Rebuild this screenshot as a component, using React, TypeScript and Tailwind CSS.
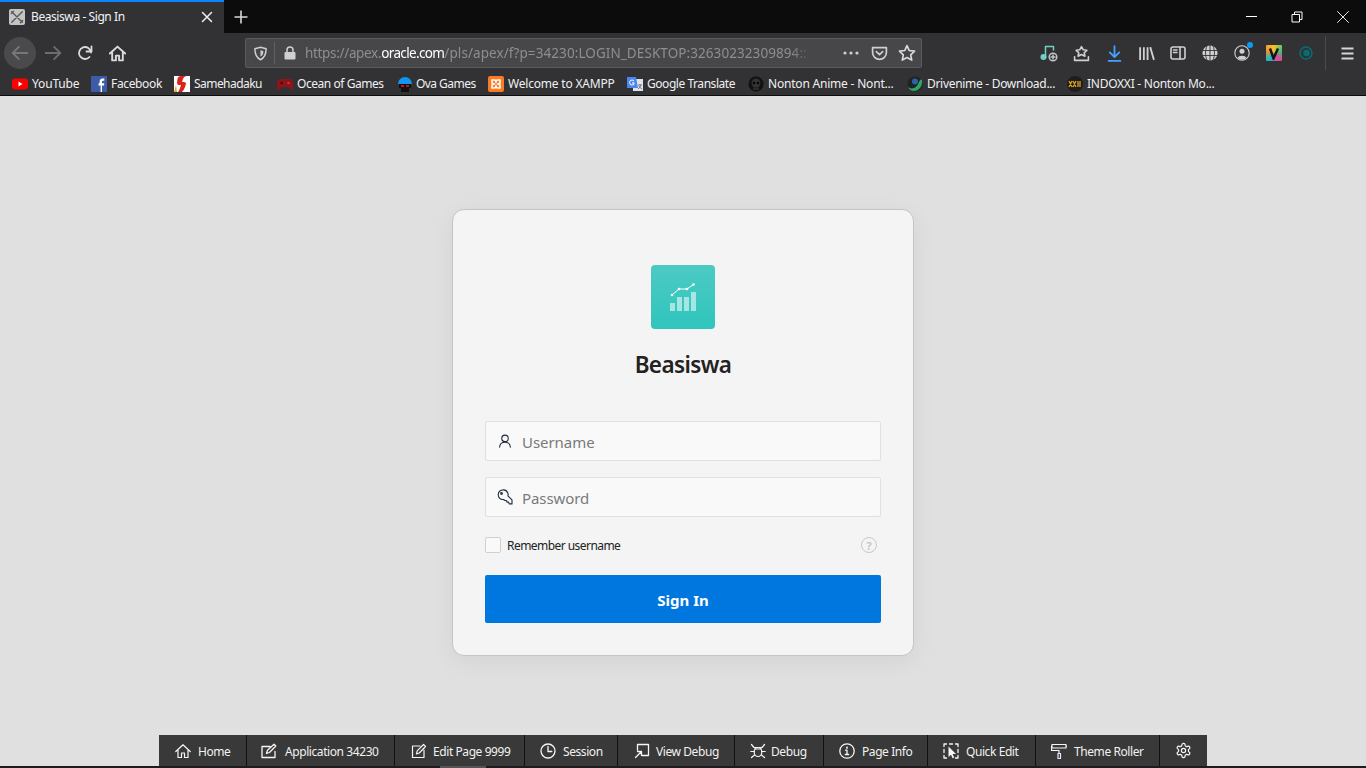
import React from "react";

const S = ({ children, c = "#d7d7d8", w = 16, vb = "0 0 16 16", sw = 1.5, f = "none" }: any) => (
  <svg width={w} height={w} viewBox={vb} fill={f} stroke={c} strokeWidth={sw} strokeLinecap="round" strokeLinejoin="round" className="shrink-0">
    {children}
  </svg>
);

const bookmarks: [string, number, string, React.ReactNode][] = [
  ["YouTube", 79, "ml-[4px] tracking-[-0.15px]", <svg width="16" height="16" viewBox="0 0 16 16"><rect x="0" y="2.500" width="16" height="11" rx="3" fill="#f00" /><path d="M6.500 5.500v5l4-2.500z" fill="#fff" /></svg>],
  ["Facebook", 83, "ml-[4px] tracking-[-0.35px]", <svg width="16" height="16" viewBox="0 0 16 16"><rect width="16" height="16" fill="#3b5ca8" /><path d="M11 16V9.500h2l.3-2.300H11V6c0-.8.3-1.200 1.200-1.200h1.100V2.600c-.4 0-1-.1-1.700-.1-1.800 0-3 1-3 3v1.700H7.600v2.300h2V16z" fill="#fff" /></svg>],
  ["Samehadaku", 103, "ml-[4px] tracking-[-0.55px]", <svg width="16" height="16" viewBox="0 0 16 16"><rect width="16" height="16" fill="#fff" /><path d="M13 0H7Q4 0 3.500 3L3 7q0 2 2 2h2l-1 3q-.5 2-2 4h4q2-2 3-5l1-3q0-2-2-2H8l1-3q.5-2 3-3z" fill="#d8261c" /><path d="M0 16l2-7 1 7z" fill="#e9a13a" /></svg>],
  ["Ocean of Games", 120, "ml-[4px] tracking-[-0.45px]", <svg width="16" height="16" viewBox="0 0 16 16"><path d="M3 3h10q3 0 3 5v4q0 2-2 2-1 0-3-3H5q-2 3-3 3-2 0-2-2V8q0-5 3-5z" fill="#8d1418" /><circle cx="4.500" cy="7" r="1.300" fill="#500" /><circle cx="11.500" cy="7" r="1.300" fill="#c33" /></svg>],
  ["Ova Games", 91, "ml-[3px] tracking-[-0.55px]", <svg width="16" height="16" viewBox="0 0 16 16"><path d="M1 8a7 7 0 0 1 14 0z" fill="#1294f2" /><rect x="2" y="8" width="12" height="4" fill="#111" /><rect x="4" y="12" width="8" height="4" fill="#111" /><rect x="4" y="9" width="3" height="2" fill="#c11" /><rect x="9" y="9" width="3" height="2" fill="#c11" /></svg>],
  ["Welcome to XAMPP", 139, "ml-[4px] tracking-[-0.2px]", <svg width="16" height="16" viewBox="0 0 16 16"><rect width="16" height="16" rx="2" fill="#fb7a24" /><path d="M4 4h3l1 2 1-2h3v3l-2 1 2 1v3H9L8 10l-1 2H4V9l2-1-2-1z" fill="none" stroke="#fff" strokeWidth="1.500" /></svg>],
  ["Google Translate", 121, "ml-[4px] tracking-[-0.45px]", <svg width="16" height="16" viewBox="0 0 16 16"><rect x="6" y="3" width="10" height="12" fill="#dfe3ea" /><path d="M0 1h9l2 11H0z" fill="#4a86ef" /><path d="M7 4.500Q3 3 2.500 6.500 3 10 7 8.500V6.800H5" stroke="#fff" fill="none" /><path d="M11 9h4M13 8v1M14 9q-1 3-3 4M12 10q1 2 3 3" stroke="#667" strokeWidth=".8" fill="none" /></svg>],
  ["Nonton Anime - Nont...", 159, "ml-[4px] tracking-[-0.2px]", <svg width="16" height="16" viewBox="0 0 16 16"><circle cx="8" cy="8" r="7.500" fill="#111" /><circle cx="8" cy="7" r="4.500" fill="#333" /><circle cx="6" cy="7" r="1.200" fill="#000" /><circle cx="10" cy="7" r="1.200" fill="#000" /><path d="M5 11.500h6v2.500H5z" fill="#2a2a2a" /></svg>],
  ["Drivenime - Download...", 160, "ml-[4px] tracking-[-0.3px]", <svg width="16" height="16" viewBox="0 0 16 16"><circle cx="8" cy="8" r="7.500" fill="#222" /><path d="M1 11c4 3 9 1 11-5 1-2 2-3 3-2 1 6-3 11-8 11-3 0-5-2-6-4z" fill="#2aa866" /><circle cx="8" cy="5.500" r="3" fill="#2b63a8" /></svg>],
  ["INDOXXI - Nonton Mo...", 150, "ml-[4px] tracking-[-0.25px]", <svg width="16" height="16" viewBox="0 0 16 16"><circle cx="8" cy="8" r="8" fill="#1d1d1d" /><path d="M2 5l3 6M5 5l-3 6M6 5l3 6M9 5l-3 6M11 5v6M13 5v6" stroke="#d9a21b" strokeWidth="1.300" fill="none" /></svg>],
];

const dev: [string, number, string, React.ReactNode][] = [
  ["Home", 88, "pl-[16px] gap-[7px]", <S c="#f6f6f6" sw={1.200}><path d="M.8 8.500 8 1.800l7.200 6.700M3 7v7.500h3.500V10h3v4.500H13V7" /></S>],
  ["Application 34230", 148, "pl-[14px] gap-[8px]", <S c="#f6f6f6" sw={1.300}><path d="M14 8.500v6H1v-11h8M5.500 10.500l1-3.200L13 1.200l1.800 1.800L8.500 9.500z" fill="none" /></S>],
  ["Edit Page 9999", 130, "pl-[16px] gap-[6px]", <S c="#f6f6f6" sw={1.200}><path d="M9 3H1.500v11.500H13V7M5.500 10.800l.7-3L12.500 1.500l2 2L8.300 10z" /></S>],
  ["Session", 93, "pl-[15px] gap-[7px]", <S c="#f6f6f6" sw={1.300}><circle cx="8" cy="8" r="7" /><path d="M8 3.500V8.500h3.800" /></S>],
  ["View Debug", 117, "pl-[16px] gap-[6px]", <S c="#f6f6f6" sw={1.300}><path d="M3.500 7V1.500h11v11H8.500M1.500 14.500l6-6M3.500 8.500h4v4" /></S>],
  ["Debug", 89, "pl-[15px] gap-[5px]", <S c="#f6f6f6" sw={1.200}><ellipse cx="8" cy="9" rx="3.800" ry="4.500" /><path d="M4.500 6h7M1.500 1.500 4 4.500h8l2.500-3M.8 8.500h3.400M11.800 8.500h3.400M1.500 14.500 4.500 12M14.500 14.500 11.500 12" /></S>],
  ["Page Info", 104, "pl-[15px] gap-[7px]", <S c="#f6f6f6" sw={1.300}><circle cx="8" cy="8" r="7.200" /><path d="M6.500 7.200H8v4M6.300 11.500h3.400" /><path d="M8 4.300v.6" strokeWidth="1.700" /></S>],
  ["Quick Edit", 108, "pl-[15px] gap-[7px]", <S c="#f6f6f6" sw={1.300}><path d="M1 3.500V1h2.500M6.500 1h3M12.500 1H15v2.500M15 6.500v3M1 6.500v3M1 12.500V15h2.500M12.500 15H15v-2.500" /><path d="M5.500 3.500v10.500l2.500-2.300 1.600 3.600 1.600-.7L9.600 11H13z" fill="#f6f6f6" stroke="none" /></S>],
  ["Theme Roller", 124, "pl-[15px] gap-[7px]", <S c="#f6f6f6" sw={1.200}><path d="M1 1.500h14v3.500H1zM15 3.200h1M1 3.200H.5v4.300H8v3" /><path d="M7 10.500h2.500V15.500H7z" stroke="#f0e6ff" /></S>],
];

const Gear = () => (
  <svg width="17" height="17" viewBox="0 0 24 24" fill="none" stroke="#f6f6f6" strokeWidth="1.700" strokeLinecap="round" strokeLinejoin="round" className="shrink-0">
    <path d="M12.220 2h-.44a2 2 0 0 0-2 2v.18a2 2 0 0 1-1 1.730l-.43.250a2 2 0 0 1-2 0l-.15-.08a2 2 0 0 0-2.730.730l-.220.380a2 2 0 0 0 .730 2.730l.150.100a2 2 0 0 1 1 1.720v.510a2 2 0 0 1-1 1.740l-.150.090a2 2 0 0 0-.730 2.730l.220.380a2 2 0 0 0 2.730.730l.150-.080a2 2 0 0 1 2 0l.430.250a2 2 0 0 1 1 1.730V20a2 2 0 0 0 2 2h.440a2 2 0 0 0 2-2v-.180a2 2 0 0 1 1-1.730l.430-.250a2 2 0 0 1 2 0l.150.080a2 2 0 0 0 2.730-.730l.220-.390a2 2 0 0 0-.730-2.730l-.150-.080a2 2 0 0 1-1-1.740v-.500a2 2 0 0 1 1-1.740l.150-.090a2 2 0 0 0 .730-2.730l-.220-.380a2 2 0 0 0-2.730-.730l-.150.080a2 2 0 0 1-2 0l-.430-.250a2 2 0 0 1-1-1.730V4a2 2 0 0 0-2-2z" />
    <circle cx="12" cy="12" r="3" />
  </svg>
);

const Slot = ({ w, children }: any) => (
  <div className="flex h-full items-center justify-center shrink-0" style={{ width: w }}>{children}</div>
);

export default function App() {
  return (
    <div className="flex h-screen w-full flex-col overflow-hidden bg-[#e0e0e0] font-['Noto_Sans','Open_Sans',sans-serif]">
      {/* tab strip */}
      <div className="flex h-[33px] shrink-0 bg-[#0c0c0d]">
        <div className="flex w-[224px] items-center border-t-2 border-[#0a84ff] bg-[#323234] pl-[9px] pr-[11px] pb-[1px]">
          <div className="flex h-4 w-4 items-center justify-center rounded-[2px] bg-[#c4c4c4]">
            <S c="#55585c" w={14} sw={1.600}><path d="M2 2l12 12M14 2 2 14M4 1.500 1.500 4M12 14.500l2.500-2.500" /></S>
          </div>
          <span className="ml-[6px] flex-1 text-[12px] tracking-[-0.42px] text-[#f4f4f5]">Beasiswa - Sign In</span>
          <S c="#f0f0f0" w={12} vb="0 0 12 12" sw={1.500}><path d="M1.500 1.500l9 9M10.500 1.500l-9 9" /></S>
        </div>
        <Slot w={34}><S c="#d8d8d8" w={14} vb="0 0 14 14" sw={1.600}><path d="M7 .5v13M.5 7h13" strokeLinecap="butt" /></S></Slot>
        <div className="flex-1" />
        <Slot w={46}><div className="h-px w-[11px] bg-white" /></Slot>
        <Slot w={46}><S c="#fff" w={12} vb="0 0 12 12" sw={1}><path d="M1 3.500h7.500V11H1zM3.500 3.500V1H11v7.500H8.500" strokeLinejoin="miter" strokeLinecap="butt" /></S></Slot>
        <Slot w={46}><S c="#fff" w={12} vb="0 0 12 12" sw={.9}><path d="M.5.500l11 11M11.500.500l-11 11" /></S></Slot>
      </div>

      {/* nav toolbar */}
      <div className="flex h-[40px] shrink-0 items-center bg-[#323234] pl-[4px]">
        <div className="flex h-8 w-8 shrink-0 items-center justify-center rounded-full bg-[#4a4a4c]">
          <S c="#77777a" w={18} sw={1.600}><path d="M14.500 8h-13M7 2.500 1.500 8 7 13.500" /></S>
        </div>
        <Slot w={33}><S c="#6d6d70" w={18} sw={1.600}><path d="M1.500 8h13M9 2.500 14.500 8 9 13.500" /></S></Slot>
        <Slot w={32}><S c="#dadadb" w={16} sw={1.800}><path d="M14 7.500A6 6 0 1 0 12.500 12M14.500 1.500v5h-5" /></S></Slot>
        <Slot w={32}><S c="#dadadb" w={17} sw={1.800}><path d="M.8 8 8 1.500 15.200 8M3 7v7.500h3.500V10h3v4.500H13V7" /></S></Slot>
        <div className="ml-[112px] flex h-[30px] w-[677px] shrink-0 items-center rounded-[2px] border border-[#5b5b5d] bg-[#474749]">
          <Slot w={28}><S c="#cfcfd0" w={15} sw={1.600}><path d="M8 1.300 14 3c0 6-1.500 9.500-6 11.700C3.500 12.500 2 9 2 3z" /><path d="M8 4.500 11 5.300c0 3-.8 4.800-3 6z" fill="#cfcfd0" stroke="none" /></S></Slot>
          <div className="h-[22px] w-px bg-[#616163]" />
          <Slot w={30}><svg width="14" height="14" viewBox="0 0 14 14"><path d="M4 6V4a3 3 0 0 1 6 0v2" stroke="#cfcfd0" strokeWidth="1.500" fill="none" /><rect x="1.500" y="6" width="11" height="7.500" rx="1" fill="#cfcfd0" /></svg></Slot>
          <div className="w-[516px] whitespace-nowrap text-[13.500px] text-[#8d8e90] [mask-image:linear-gradient(to_right,black_486px,transparent_506px)]">
            <span className="tracking-[-0.33px]">https://apex.</span><span className="tracking-[-0.64px] text-white">oracle.com</span><span className="tracking-[0.08px]">/pls/apex/f?p=34230:LOGIN_DESKTOP:32630232309894::</span>
          </div>
          <div className="flex-1" />
          <Slot w={28}><svg width="16" height="4" viewBox="0 0 16 4"><circle cx="2" cy="2" r="1.600" fill="#cfcfd0" /><circle cx="8" cy="2" r="1.600" fill="#cfcfd0" /><circle cx="14" cy="2" r="1.600" fill="#cfcfd0" /></svg></Slot>
          <Slot w={28}><S c="#cfcfd0" w={17} sw={1.600}><path d="M1.500 2.500h13V7A6.500 6.500 0 0 1 1.500 7z" /><path d="M5 6.200 8 9l3-2.800" /></S></Slot>
          <Slot w={28}><S c="#dadadb" w={18} sw={1.500}><path d="m8 1.500 2 4.300 4.700.6-3.400 3.200.9 4.700L8 12l-4.200 2.300.9-4.700L1.300 6.400 6 5.800z" /></S></Slot>
        </div>
        <div className="ml-[111px] flex h-full items-center">
          <Slot w={32}>
            <S c="#6fd0c3" w={18} vb="0 0 18 18" sw={1.500}><path d="M5.500 13V2.500h8V6" /><circle cx="3.500" cy="13" r="2.300" fill="#6fd0c3" /><circle cx="13" cy="13" r="3.800" stroke="#bfc3c5" /><path d="M13 11v4M11 13h4" stroke="#bfc3c5" /></S>
          </Slot>
          <Slot w={33}><S c="#d0d0d1" w={17} sw={1.500}><path d="m8 1.500 1.700 3 3.300.5-2.400 2.300.6 3.200L8 9l-3.200 1.500.6-3.200L3 5l3.300-.5z" /><path d="M1.500 11v3.500h13V11" /></S></Slot>
          <Slot w={32}><S c="#45a1ff" w={17} sw={1.700}><path d="M8 1v10M3.500 7 8 11.300 12.500 7M2.500 15h11" /></S></Slot>
          <Slot w={32}><S c="#d0d0d1" w={17} sw={1.700}><path d="M2 2v12M5.500 2v12M9 2v12M11.500 2l3.500 12" strokeLinecap="butt" /></S></Slot>
          <Slot w={32}><S c="#d0d0d1" w={16} sw={1.600}><rect x="1" y="2" width="14" height="12" rx="2" /><path d="M10 2v12M3.500 5H7M3.500 7.500H7" /></S></Slot>
          <Slot w={32}><S c="#323234" w={16} sw={.9} ><circle cx="8" cy="8" r="7.600" fill="#d0d0d1" stroke="none" /><path d="M.5 5.500h15M.5 10.500h15M8 .5v15M5 1c-2 4-2 10 0 14M11 1c2 4 2 10 0 14" /></S></Slot>
          <Slot w={32}>
            <div className="relative h-4 w-4">
              <S c="#d0d0d1" w={16} sw={1.100}><circle cx="8" cy="8" r="7.200" /><circle cx="8" cy="6.300" r="2.500" fill="#d0d0d1" stroke="none" /><path d="M3.600 12.800c1-2.800 7.800-2.800 8.800 0a6 6 0 0 1-8.800 0z" fill="#d0d0d1" stroke="none" /></S>
              <div className="absolute -right-[3px] -top-[3px] h-[6px] w-[6px] rounded-full bg-[#0a9bf5]" />
            </div>
          </Slot>
          <Slot w={32}>
            <div className="flex h-4 w-4 items-center justify-center rounded-[1px] bg-[conic-gradient(#f7c623,#3fc47a,#e6439b,#17b8c9,#f7922b,#f7c623)]">
              <svg width="12" height="13" viewBox="0 0 12 13"><path d="M2 1.500 5.500 11.500 10 1.500" fill="none" stroke="#141414" strokeWidth="2.400" /></svg>
            </div>
          </Slot>
          <Slot w={32}><S c="#076d75" w={14} vb="0 0 14 14" sw={1.500}><circle cx="7" cy="7" r="6" /><circle cx="7.500" cy="7" r="2.500" fill="#076d75" /></S></Slot>
          <div className="ml-[3px] h-[34px] w-px bg-[#4b4b4d]" />
          <div className="flex h-full w-[40px] shrink-0 items-center pl-[15px]"><S c="#d5d5d6" w={13} vb="0 0 13 13" sw={1.800}><path d="M.5 1.500h12M.5 6.500h12M.5 11.500h12" strokeLinecap="butt" /></S></div>
        </div>
      </div>

      {/* bookmarks */}
      <div className="flex h-[22px] shrink-0 items-start bg-[#323234] pl-[12px]">
        {bookmarks.map(([t, w, tr, ic]) => (
          <div key={t} className="flex h-[22px] shrink-0 items-center" style={{ width: w }}>
            {ic}
            <span className={"whitespace-nowrap text-[12px] text-[#f0f0f1] " + tr}>{t}</span>
          </div>
        ))}
      </div>
      <div className="h-px shrink-0 bg-[#0c0c0d]" />

      {/* page */}
      <div className="flex flex-1 flex-col items-center pt-[113px]">
        <div className="flex h-[447px] w-[462px] flex-col items-center rounded-[12px] border border-[#c4c4c4] bg-[#f4f4f4] px-[32px] pt-[55px] shadow-[0_6px_24px_rgba(0,0,0,0.06)]">
          <div className="flex h-16 w-16 items-center justify-center rounded-[4px] bg-[linear-gradient(#4ccac3,#2fc5bd)]">
            <svg width="28" height="28" viewBox="0 0 28 28">
              <g fill="#ffffff" fillOpacity=".55">
                <rect x="1" y="20" width="5" height="8" />
                <rect x="8" y="14" width="5" height="14" />
                <rect x="15" y="14" width="5" height="14" />
                <rect x="22" y="9" width="5" height="19" />
              </g>
              <path d="M3 12l7-6h8L24.500 1.500" stroke="#fff" strokeWidth="1" fill="none" />
              <g fill="#fff"><circle cx="3" cy="12" r="1.300" /><circle cx="10" cy="6" r="1.300" /><circle cx="18" cy="6" r="1.300" /><circle cx="24.500" cy="1.500" r="1.300" /></g>
            </svg>
          </div>
          <h1 className="mt-[19px] h-[34px] text-[22.500px] font-semibold leading-[34px] tracking-[-0.6px] text-[#222]">Beasiswa</h1>
          <div className="mt-[39px] flex h-10 w-[396px] shrink-0 items-center rounded-[2px] border border-[#e0e0e0] bg-[#f9f9f9] pl-[12px]">
            <S c="#1f2a3c" w={14} sw={1.200}><circle cx="8" cy="5" r="3.700" /><path d="M1.800 15c.3-3.500 2.500-5.500 6.200-5.500s5.900 2 6.200 5.500" /></S>
            <span className="ml-[10px] pt-[3px] text-[15px] tracking-[-0.05px] text-[#7a7a7a]">Username</span>
          </div>
          <div className="mt-[16px] flex h-10 w-[396px] shrink-0 items-center rounded-[2px] border border-[#e0e0e0] bg-[#f9f9f9] pl-[11px]">
            <S c="#1f2a3c" w={16} sw={1.100}><path d="M1.200 5.500a5 5 0 0 1 9.600-1.500c.4 1 .4 2 .1 2.800l4.100 4.100v4h-2.800l-.6-1.800h-1.600l-.6-1.600H8L6.400 10.500C3.500 11 1.200 8.500 1.200 5.500z" /><circle cx="4.500" cy="4.500" r=".9" /></S>
            <span className="ml-[9px] pt-[3px] text-[15px] tracking-[-0.1px] text-[#7a7a7a]">Password</span>
          </div>
          <div className="mt-[20px] flex h-4 w-[396px] shrink-0 items-center">
            <div className="h-4 w-4 rounded-[2px] border border-[#d0d0d0] bg-[#f9f9f9]" />
            <span className="ml-[6px] pt-[1px] text-[12px] tracking-[-0.55px] text-[#222]">Remember username</span>
            <div className="ml-auto mr-[4px] flex h-4 w-4 items-center justify-center rounded-full border border-[#c8c8c8] text-[11px] font-semibold leading-none text-[#c0c0c0]">?</div>
          </div>
          <div className="mt-[22px] flex h-12 w-[396px] shrink-0 items-center justify-center rounded-[2px] bg-[#0076df] pt-[2px] text-[15px] font-bold text-white">Sign In</div>
        </div>

        {/* dev toolbar */}
        <div className="mt-auto flex h-[31px] w-[1048px] bg-[#393939]">
          {dev.map(([t, w, pl, ic]) => (
            <div key={t} className={"flex h-full shrink-0 items-center border-r border-[#111] " + pl} style={{ width: w }}>
              {ic}
              <span className="whitespace-nowrap pt-[3px] text-[12px] tracking-[-0.42px] text-[#f2f2f2]">{t}</span>
            </div>
          ))}
          <div className="flex flex-1 items-center pl-[15px]"><Gear /></div>
        </div>
      </div>
      <div className="relative h-[2px] shrink-0 bg-[#1c1c1e]">
        <div className="absolute left-[440px] top-0 h-[2px] w-[46px] bg-[#55555a]" />
      </div>
    </div>
  );
}
